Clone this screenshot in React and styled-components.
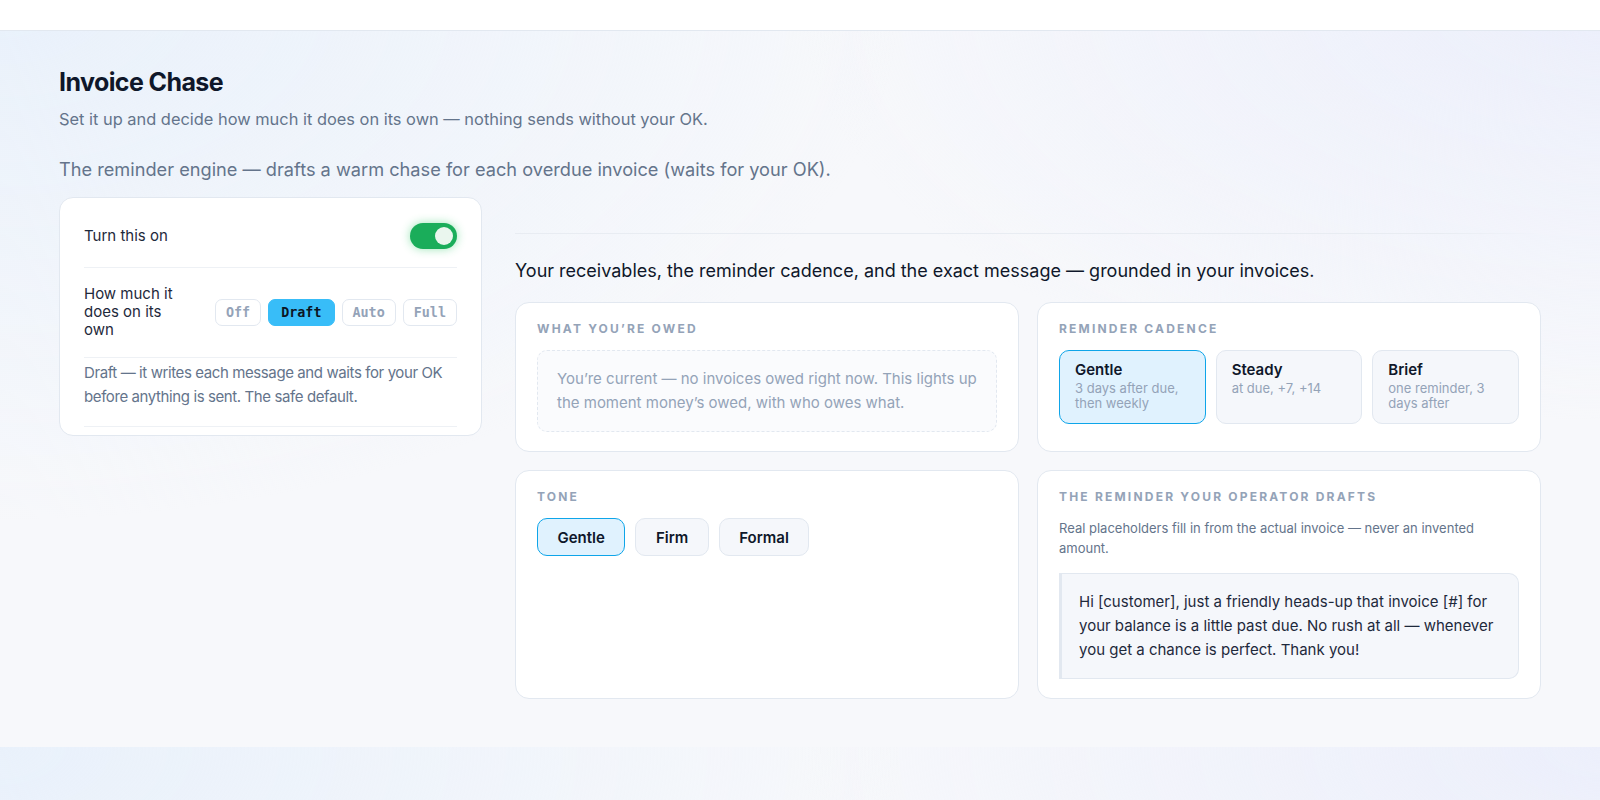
import styled, { createGlobalStyle, css } from 'styled-components';

const GlobalStyle = createGlobalStyle`
  html, body { margin: 0; padding: 0; }
  body {
    font-family: Inter, "Noto Sans", "Liberation Sans", sans-serif;
    color: #0f172a;
    background:
      radial-gradient(ellipse 900px 520px at 0% 0%, #e9f1fb 0%, rgba(233,241,251,0) 100%),
      radial-gradient(ellipse 800px 420px at 100% 0%, #eceffb 0%, rgba(236,239,251,0) 100%),
      #f7f8fb;
  }
  * { box-sizing: border-box; }
`;

const TopBar = styled.header`
  height: 31px;
  background: #fff;
  border-bottom: 1px solid #e2e8f0;
`;

const Main = styled.main`
  padding: 36px 59px 48px;
`;

const Title = styled.h1`
  margin: 0;
  font-size: 25px;
  line-height: 31px;
  font-weight: 700;
  letter-spacing: -0.6px;
  color: #0f172a;
`;

const Subtitle = styled.p`
  margin: 9px 0 0;
  font-size: 16.4px;
  line-height: 24px;
  color: #64748b;
`;

const Lead = styled.p`
  margin: 25px 0 0;
  font-size: 18.2px;
  line-height: 26px;
  color: #64748b;
`;

const Layout = styled.div`
  display: grid;
  grid-template-columns: 423px 1fr;
  gap: 33px;
  margin-top: 15px;
  align-items: start;
`;

const SettingsCard = styled.section`
  background: #fff;
  border: 1px solid #e2e8f0;
  border-radius: 14px;
  padding: 8px 24px;
`;

const SettingRow = styled.div`
  display: flex;
  align-items: center;
  justify-content: space-between;
  gap: 12px;
  padding: ${p => p.$pad || '16px 0'};
  border-bottom: 1px solid #eef1f5;
  font-size: 15px;
  line-height: 18px;
  color: #1e293b;
`;

const RowLabel = styled.span`
  max-width: ${p => p.$narrow ? '106px' : 'none'};
`;

const Toggle = styled.button`
  position: relative;
  width: 47px;
  height: 26px;
  border: none;
  padding: 0;
  border-radius: 13px;
  background: #1aad5a;
  box-shadow: 0 0 10px rgba(34, 197, 94, 0.45);
  cursor: pointer;

  &::after {
    content: '';
    position: absolute;
    top: 4px;
    right: 4px;
    width: 18px;
    height: 18px;
    border-radius: 50%;
    background: #eaf6ee;
  }
`;

const Segments = styled.div`
  display: flex;
  gap: 7px;
`;

const Segment = styled.button`
  height: 27px;
  padding: 0 10px;
  border-radius: 7px;
  font-family: "DejaVu Sans Mono", "Liberation Mono", monospace;
  font-size: 13.4px;
  font-weight: 700;
  cursor: pointer;
  ${p => p.$active ? css`
    background: #38bdf8;
    border: 1px solid #38bdf8;
    color: #0b1524;
    padding: 0 12px;
  ` : css`
    background: #fff;
    border: 1px solid #e2e8f0;
    color: #94a3b8;
  `}
`;

const Note = styled.p`
  margin: 0;
  padding: 3px 0 17px;
  border-bottom: 1px solid #eef1f5;
  font-size: 15px;
  line-height: 24px;
  color: #64748b;
  letter-spacing: -0.4px;
`;

const Side = styled.div`
  padding-top: 36px;
`;

const Divider = styled.hr`
  margin: 0;
  border: none;
  height: 1px;
  background: linear-gradient(to right, #e8ecf2 0%, #e8ecf2 90%, rgba(232,236,242,0) 100%);
`;

const SideHeading = styled.h2`
  margin: 24px 0 0;
  font-size: 18px;
  line-height: 26px;
  font-weight: 400;
  color: #0f172a;
`;

const Grid = styled.div`
  display: grid;
  grid-template-columns: 1fr 1fr;
  gap: 18px;
  margin-top: 18px;
`;

const Panel = styled.section`
  background: #fff;
  border: 1px solid #e2e8f0;
  border-radius: 14px;
  padding: 19px 21px 19px;
`;

const PanelLabel = styled.div`
  font-size: 12px;
  line-height: 14px;
  font-weight: 700;
  letter-spacing: 2.2px;
  text-transform: uppercase;
  color: #94a3b8;
`;

const EmptyState = styled.div`
  margin-top: 14px;
  padding: 16px 19px;
  border: 1px dashed #e2e8f0;
  border-radius: 10px;
  background: #fafbfd;
  font-size: 15px;
  line-height: 24px;
  color: #94a3b8;
`;

const Options = styled.div`
  display: grid;
  grid-template-columns: repeat(3, 1fr);
  gap: 10px;
  margin-top: 14px;
`;

const pickable = css`
  border-radius: 10px;
  ${p => p.$active ? css`
    background: #e0f2fe;
    border: 1.5px solid #0ea5e9;
  ` : css`
    background: #f5f7fb;
    border: 1px solid #e2e8f0;
  `}
`;

const Option = styled.div`
  ${pickable}
  padding: 10px 15px 12px;
`;

const OptionTitle = styled.div`
  font-size: 15px;
  line-height: 18px;
  font-weight: 600;
  color: #0f172a;
`;

const OptionHint = styled.div`
  margin-top: 2px;
  font-size: 13px;
  line-height: 15px;
  color: #94a3b8;
`;

const Chips = styled.div`
  display: flex;
  gap: 10px;
  margin-top: 14px;
`;

const Chip = styled.button`
  ${pickable}
  height: 38px;
  padding: 0 19.5px;
  font-family: inherit;
  font-size: 15px;
  font-weight: 600;
  color: #0f172a;
  cursor: pointer;
`;

const Hint = styled.p`
  margin: 14px 0 0;
  font-size: 13px;
  line-height: 20px;
  color: #64748b;
`;

const Message = styled.blockquote`
  margin: 15px 0 0;
  padding: 16px 16px 16px 17px;
  background: #f5f7fb;
  border: 1px solid #e2e8f0;
  border-left: 3px solid #e2e8f0;
  border-radius: 0 10px 10px 0;
  font-size: 15px;
  line-height: 24px;
  color: #1e293b;
`;

const cadences = [
  { name: 'Gentle', hint: '3 days after due, then weekly' },
  { name: 'Steady', hint: 'at due, +7, +14' },
  { name: 'Brief', hint: 'one reminder, 3 days after' },
];

const levels = ['Off', 'Draft', 'Auto', 'Full'];
const tones = ['Gentle', 'Firm', 'Formal'];

const App = () => (
  <>
    <GlobalStyle />
    <TopBar />
    <Main>
      <Title>Invoice Chase</Title>
      <Subtitle>Set it up and decide how much it does on its own — nothing sends without your OK.</Subtitle>
      <Lead>The reminder engine — drafts a warm chase for each overdue invoice (waits for your OK).</Lead>

      <Layout>
        <SettingsCard>
          <SettingRow $pad="17px 0 18px">
            <RowLabel>Turn this on</RowLabel>
            <Toggle aria-label="Turn this on" />
          </SettingRow>
          <SettingRow $pad="17px 0 18px">
            <RowLabel $narrow>How much it does on its own</RowLabel>
            <Segments>
              {levels.map(l => (
                <Segment key={l} $active={l === 'Draft'}>{l}</Segment>
              ))}
            </Segments>
          </SettingRow>
          <Note>Draft — it writes each message and waits for your OK before anything is sent. The safe default.</Note>
        </SettingsCard>

        <Side>
          <Divider />
          <SideHeading>Your receivables, the reminder cadence, and the exact message — grounded in your invoices.</SideHeading>
          <Grid>
            <Panel>
              <PanelLabel>What you’re owed</PanelLabel>
              <EmptyState>
                You’re current — no invoices owed right now. This lights up the moment money’s owed, with who owes what.
              </EmptyState>
            </Panel>

            <Panel>
              <PanelLabel>Reminder cadence</PanelLabel>
              <Options>
                {cadences.map(c => (
                  <Option key={c.name} $active={c.name === 'Gentle'}>
                    <OptionTitle>{c.name}</OptionTitle>
                    <OptionHint>{c.hint}</OptionHint>
                  </Option>
                ))}
              </Options>
            </Panel>

            <Panel>
              <PanelLabel>Tone</PanelLabel>
              <Chips>
                {tones.map(t => (
                  <Chip key={t} $active={t === 'Gentle'}>{t}</Chip>
                ))}
              </Chips>
            </Panel>

            <Panel>
              <PanelLabel>The reminder your operator drafts</PanelLabel>
              <Hint>Real placeholders fill in from the actual invoice — never an invented amount.</Hint>
              <Message>
                Hi [customer], just a friendly heads-up that invoice [#] for your balance is a little past due. No rush at all — whenever you get a chance is perfect. Thank you!
              </Message>
            </Panel>
          </Grid>
        </Side>
      </Layout>
    </Main>
  </>
);

export default App;
